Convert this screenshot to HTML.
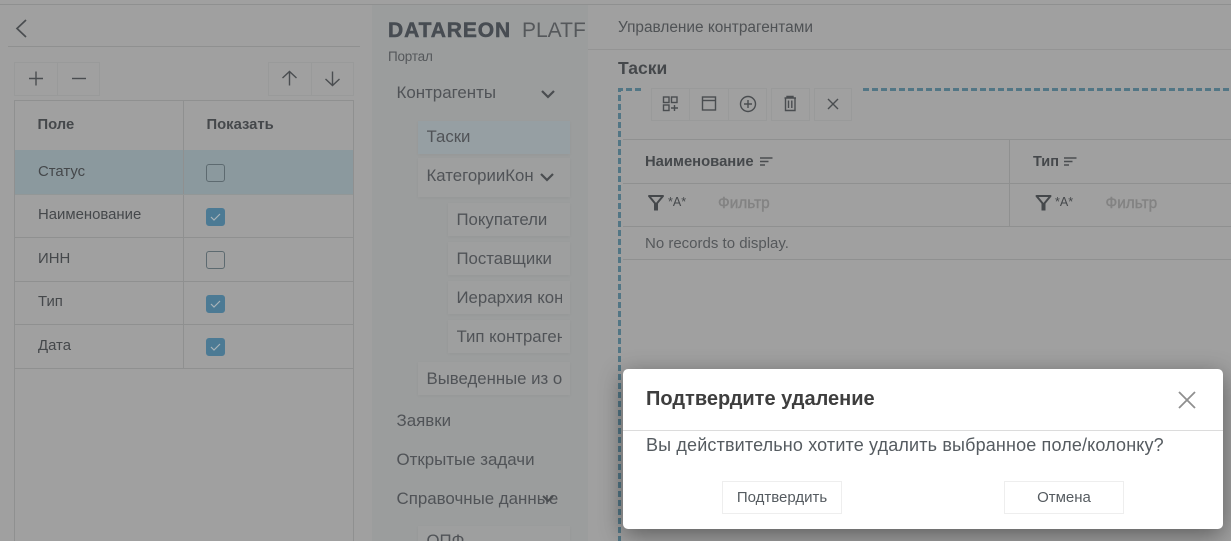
<!DOCTYPE html>
<html lang="ru"><head><meta charset="utf-8"><title>Datareon</title>
<style>
html,body{margin:0;padding:0;width:1231px;height:541px;overflow:hidden;background:#a0a0a0}
body{position:relative;font-family:"Liberation Sans",sans-serif;color:#45484b;font-size:14px}
.a{position:absolute}
.t{position:absolute;white-space:nowrap;line-height:18px}
.l{position:absolute;background:#8f9090}
.b{font-weight:bold}
.btn{position:absolute;box-sizing:border-box;border:1px solid #999a9a;background:#a0a0a0}
.item{position:absolute;background:#9e9f9f;box-shadow:0 1px 3px rgba(0,0,0,.04);height:33px;white-space:nowrap;line-height:33px;font-size:16.800px;box-sizing:border-box;color:#505357}
.item span{position:absolute;left:8.500px;top:0;bottom:0;overflow:hidden}
.sub span{width:105px}
.nav{position:absolute;left:396.500px;font-size:16.900px;line-height:20px;white-space:nowrap;color:#505357}
.cb{position:absolute;left:206px;width:19px;height:18px;box-sizing:border-box;border:1px solid #5d6a70;border-radius:3px}
.cb.on{background:#4c7a94;border-color:#4c7a94}
svg{position:absolute;overflow:visible}
.ic{fill:none;stroke:#4a4d50;stroke-width:1.4}
.row{font-size:14.900px}
</style></head><body>

<div class="l" style="left:0;top:4px;width:1231px;height:1px"></div>

<!-- left panel -->
<svg style="left:0;top:0" width="40" height="45"><path d="M26 20 L17 28.500 L26 37" fill="none" stroke="#4a4d50" stroke-width="1.700"/></svg>
<div class="l" style="left:8px;top:46px;width:352px;height:1px"></div>

<div class="btn" style="left:14px;top:62px;width:44px;height:34px"></div>
<div class="btn" style="left:57px;top:62px;width:43px;height:34px"></div>
<div class="btn" style="left:268px;top:62px;width:44px;height:34px"></div>
<div class="btn" style="left:311px;top:62px;width:43px;height:34px"></div>
<svg style="left:0;top:0" width="370" height="100" class="ic">
<path d="M29 78.500H43M36 71.500V85.500" class="ic"/>
<path d="M72 78.500H86" class="ic"/>
<path d="M289.500 71.500V85.500M282.500 78 L289.500 71.500 L296.500 78" class="ic"/>
<path d="M332.500 71.500V85.500M325.500 79 L332.500 85.500 L339.500 79" class="ic"/>
</svg>

<div class="a" style="left:14px;top:100px;width:340px;height:441px;box-sizing:border-box;border:1px solid #8f9090;border-bottom:0"></div>
<div class="a" style="left:15px;top:150px;width:338px;height:45px;background:#8b999e"></div>
<div class="l" style="left:183px;top:101px;width:1px;height:267px"></div>
<div class="l" style="left:15px;top:194px;width:338px;height:1px;background:#929797"></div>
<div class="l" style="left:15px;top:237px;width:338px;height:1px"></div>
<div class="l" style="left:15px;top:281px;width:338px;height:1px"></div>
<div class="l" style="left:15px;top:324px;width:338px;height:1px"></div>
<div class="l" style="left:15px;top:368px;width:338px;height:1px"></div>

<div class="t b" style="left:37.500px;top:116px;font-size:14.800px">Поле</div>
<div class="t b" style="left:206.500px;top:116px;font-size:14.800px">Показать</div>
<div class="t row" style="left:38px;top:163px">Статус</div>
<div class="t row" style="left:38px;top:206px">Наименование</div>
<div class="t row" style="left:38px;top:250px">ИНН</div>
<div class="t row" style="left:38px;top:293px">Тип</div>
<div class="t row" style="left:38px;top:337px">Дата</div>

<div class="cb" style="top:164px"></div>
<div class="cb on" style="top:208px"></div>
<div class="cb" style="top:251px"></div>
<div class="cb on" style="top:295px"></div>
<div class="cb on" style="top:338px"></div>
<svg style="left:0;top:0" width="370" height="370">
<path d="M211 217l3 3 6-6M211 304l3 3 6-6M211 347l3 3 6-6" fill="none" stroke="#a9b4b9" stroke-width="1.200"/>
</svg>

<!-- sidebar -->
<div class="a" style="left:372px;top:5px;width:216px;height:536px;background:#9b9d9d"></div>
<div class="t" style="left:388px;top:19px;font-size:21px;line-height:24px;font-weight:bold;color:#474c52;letter-spacing:.9px;-webkit-text-stroke:.5px #474c52">DATAREON</div>
<div class="t" style="left:522px;top:19px;font-size:21px;line-height:24px;color:#55585b">PLATF</div>
<div class="t" style="left:388px;top:48px;font-size:13.500px;color:#55585b;letter-spacing:-.2px">Портал</div>

<div class="nav" style="top:83px">Контрагенты</div>
<svg style="left:0;top:0" width="570" height="200"><path d="M542 91l6 6 6-6" fill="none" stroke="#4a4d50" stroke-width="2.200"/></svg>

<div class="item" style="left:418px;top:121px;width:152px;background:#969fa3;line-height:32px"><span>Таски</span></div>
<div class="item" style="left:418px;top:158px;width:152px;height:39px;line-height:36px"><span style="width:114px">КатегорииКон</span></div>
<svg style="left:0;top:0" width="570" height="200"><path d="M541 174l6 6 6-6" fill="none" stroke="#4a4d50" stroke-width="2.200"/></svg>
<div class="item sub" style="left:448px;top:203px;width:122px"><span>Покупатели</span></div>
<div class="item sub" style="left:448px;top:242px;width:122px"><span>Поставщики</span></div>
<div class="item sub" style="left:448px;top:281px;width:122px"><span>Иерархия контрагентов</span></div>
<div class="item sub" style="left:448px;top:320px;width:122px"><span>Тип контрагента</span></div>
<div class="item" style="left:418px;top:362px;width:152px"><span style="width:135px">Выведенные из оборота</span></div>

<div class="nav" style="top:411px">Заявки</div>
<div class="nav" style="top:450px">Открытые задачи</div>
<div class="nav" style="top:489px">Справочные данные</div>
<svg style="left:0;top:0" width="570" height="541"><path d="M543 496l5 5 5-5" fill="none" stroke="#4a4d50" stroke-width="2"/></svg>
<div class="item" style="left:418px;top:526px;width:152px;height:15px"><span style="top:0;height:15px;line-height:30px">ОПФ</span></div>

<!-- main -->
<div class="t" style="left:618px;top:19px;font-size:15.400px;color:#4f5255">Управление контрагентами</div>
<div class="l" style="left:588px;top:49px;width:643px;height:1px;background:#949494"></div>
<div class="t b" style="left:618px;top:59px;font-size:17.500px;color:#45484b">Таски</div>

<svg style="left:0;top:0" width="1231" height="541">
<path d="M641 89.500H619.500V541" fill="none" stroke="#527685" stroke-width="3" stroke-dasharray="6 3"/>
<path d="M863 89.500H1231" fill="none" stroke="#527685" stroke-width="3" stroke-dasharray="6 3"/>
</svg>

<div class="btn" style="left:651px;top:88px;width:39px;height:33px"></div>
<div class="btn" style="left:689px;top:88px;width:40px;height:33px"></div>
<div class="btn" style="left:728px;top:88px;width:39px;height:33px"></div>
<div class="btn" style="left:771px;top:88px;width:39px;height:33px"></div>
<div class="btn" style="left:814px;top:88px;width:38px;height:33px"></div>
<svg style="left:0;top:0" width="900" height="220">
<g class="ic" stroke-width="1.300">
<rect x="663.500" y="97" width="5.500" height="5.500" class="ic"/><rect x="671.500" y="97" width="5.500" height="5.500" class="ic"/><rect x="663.500" y="105" width="5.500" height="5.500" class="ic"/>
<path d="M671 108H678M674.500 105V111" class="ic"/>
<rect x="702.500" y="97" width="13" height="13" class="ic"/><path d="M702.500 100.500H715.500" class="ic"/>
<circle cx="748" cy="104" r="7.500" class="ic"/><path d="M744 104H752M748 100V108" class="ic"/>
<path d="M784.500 98H796M785.500 98V110.500H795V98M788.500 100.500V108M791.800 100.500V108M787 98V96.500H793V98" class="ic"/>
<path d="M828 99L838 109M838 99L828 109" class="ic"/>
</g>
<g>
<path d="M760 158H772.500M760 161.500H768.500M760 165H765M1064 158H1076.500M1064 161.500H1072.500M1064 165H1069" fill="none" stroke="#4a4d50" stroke-width="1.400"/>
<path d="M649 196H663L656 204.500Z" fill="none" stroke="#45484b" stroke-width="2" stroke-linejoin="round"/>
<path d="M654 203H658V210.500H654Z" fill="#45484b"/>
<path d="M1036.500 196H1050.500L1043.500 204.500Z" fill="none" stroke="#45484b" stroke-width="2" stroke-linejoin="round"/>
<path d="M1041.500 203H1045.500V210.500H1041.500Z" fill="#45484b"/>
</g>
</svg>

<div class="l" style="left:623px;top:139px;width:608px;height:1px;background:#8f9090"></div>
<div class="l" style="left:623px;top:183px;width:608px;height:1px;background:#8f9090"></div>
<div class="l" style="left:623px;top:226px;width:608px;height:1px;background:#8f9090"></div>
<div class="l" style="left:623px;top:259px;width:608px;height:1px;background:#8f9090"></div>
<div class="l" style="left:1009px;top:140px;width:1px;height:87px;background:#8f9090"></div>

<div class="t b" style="left:645px;top:153px;font-size:14.800px">Наименование</div>
<div class="t b" style="left:1033px;top:153px;font-size:14.500px">Тип</div>
<div class="t" style="left:668px;top:193px;font-size:12.500px">*A*</div>
<div class="t" style="left:1055px;top:193px;font-size:12.500px">*A*</div>
<div class="t" style="left:718px;top:195px;font-size:15.400px;color:#838383;-webkit-text-stroke:.4px #838383">Фильтр</div>
<div class="t" style="left:1105.500px;top:195px;font-size:15.400px;color:#838383;-webkit-text-stroke:.4px #838383">Фильтр</div>
<div class="t" style="left:645px;top:235px;font-size:15px;color:#55585b">No records to display.</div>

<!-- dialog -->
<div class="a" style="left:623px;top:369px;width:600px;height:160px;background:#fff;border-radius:5px;box-shadow:0 6px 24px rgba(0,0,0,.42)"></div>
<div class="t b" style="left:646px;top:388px;font-size:20px;line-height:22px;color:#3e3e3e">Подтвердите удаление</div>
<svg style="left:0;top:0" width="1231" height="541"><path d="M1179 392L1195 408M1195 392L1179 408" fill="none" stroke="#8f8f8f" stroke-width="1.800"/></svg>
<div class="a" style="left:623px;top:430px;width:600px;height:1px;background:#dcdcdc"></div>
<div class="t" style="left:646px;top:435px;font-size:18px;line-height:20px;letter-spacing:.15px;color:#555b60">Вы действительно хотите удалить выбранное поле/колонку?</div>
<div class="a" style="left:722px;top:481px;width:120px;height:33px;box-sizing:border-box;border:1px solid #eeeeee;text-align:center;line-height:31px;font-size:15px;color:#555b60">Подтвердить</div>
<div class="a" style="left:1004px;top:481px;width:120px;height:33px;box-sizing:border-box;border:1px solid #eeeeee;text-align:center;line-height:31px;font-size:15px;color:#555b60">Отмена</div>

</body></html>
